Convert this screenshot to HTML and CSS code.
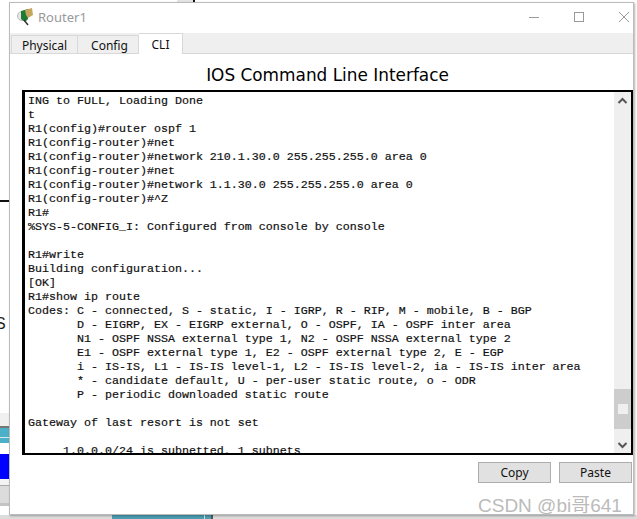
FILE: index.html
```html
<!DOCTYPE html>
<html lang="en">
<head>
<meta charset="utf-8">
<title>Router1</title>
<link rel="stylesheet" href="styles.css">
</head>
<body>
<div class="desk">
  <div class="bg-top"></div>
  <div class="bg-notch"></div>
  <div class="bg-line"></div>
  <div class="bg-s">S</div>
  <div class="bg-strip"></div>
  <div class="bg-bottom"><span class="bg-teal"></span><span class="bg-teal2"></span><span class="bg-dark"></span></div>
  <div class="window">
    <header class="titlebar">
      <svg class="app-icon" width="20" height="20" viewBox="0 0 20 20">
        <circle cx="6" cy="9" r="4.500" fill="#e6e6e6" stroke="#bcbcbc"/>
        <path d="M5 4l7-2 0 10-3 3-4-3z" fill="#1f7a35"/>
        <path d="M9 3l7-2 1 7-5 3-2-3z" fill="#c8a55c"/>
        <path d="M8 13l4 5" stroke="#333" stroke-width="1.500" fill="none"/>
      </svg>
      <span class="title">Router1</span>
      <div class="controls">
        <svg width="12" height="12" viewBox="0 0 12 12"><path d="M1 6.500h10" stroke="#999" fill="none"/></svg>
        <svg width="12" height="12" viewBox="0 0 12 12"><rect x="1.500" y="1.500" width="9" height="9" stroke="#999" fill="none"/></svg>
        <svg width="12" height="12" viewBox="0 0 12 12"><path d="M1 1l10 10M11 1L1 11" stroke="#999" fill="none"/></svg>
      </div>
    </header>
    <nav class="tabs">
      <div class="tab phys">Physical</div>
      <div class="tab conf">Config</div>
      <div class="tab active">CLI</div>
    </nav>
    <main class="panel">
      <h1 class="heading">IOS Command Line Interface</h1>
      <div class="terminal">
        <pre class="console">ING to FULL, Loading Done
t
R1(config)#router ospf 1
R1(config-router)#net
R1(config-router)#network 210.1.30.0 255.255.255.0 area 0
R1(config-router)#net
R1(config-router)#network 1.1.30.0 255.255.255.0 area 0
R1(config-router)#^Z
R1#
%SYS-5-CONFIG_I: Configured from console by console

R1#write
Building configuration...
[OK]
R1#show ip route
Codes: C - connected, S - static, I - IGRP, R - RIP, M - mobile, B - BGP
       D - EIGRP, EX - EIGRP external, O - OSPF, IA - OSPF inter area
       N1 - OSPF NSSA external type 1, N2 - OSPF NSSA external type 2
       E1 - OSPF external type 1, E2 - OSPF external type 2, E - EGP
       i - IS-IS, L1 - IS-IS level-1, L2 - IS-IS level-2, ia - IS-IS inter area
       * - candidate default, U - per-user static route, o - ODR
       P - periodic downloaded static route

Gateway of last resort is not set

     1.0.0.0/24 is subnetted, 1 subnets</pre>
        <div class="scrollbar">
          <svg class="arrow" width="15" height="17" viewBox="0 0 15 17"><path d="M3.500 11l4-4 4 4" stroke="#555" stroke-width="2" fill="none"/></svg>
          <div class="track"></div>
          <div class="thumb"><span class="grip"></span></div>
          <svg class="arrow" width="15" height="17" viewBox="0 0 15 17"><path d="M3.500 7l4 4 4-4" stroke="#555" stroke-width="2" fill="none"/></svg>
        </div>
      </div>
      <div class="actions">
        <button class="btn">Copy</button>
        <button class="btn">Paste</button>
      </div>
    </main>
  </div>
  <div class="watermark">CSDN @bi哥641</div>
</div>
</body>
</html>
```
FILE: styles.css
```css
* { box-sizing: border-box; }
html, body { margin: 0; height: 100%; background: #fff; overflow: hidden; }
.desk { position: relative; width: 637px; height: 519px; background: #fff; overflow: hidden; }
.bg-top { position: absolute; left: 177px; top: 0; width: 16px; height: 2px; background: #e4e4e4; }
.bg-notch { position: absolute; left: 193px; top: 0; width: 2px; height: 3px; background: #111; }
.bg-line { position: absolute; left: 0; top: 200px; width: 9px; height: 2px; background: #111; }
.bg-s { position: absolute; left: -5px; top: 315px; font: 16px "Liberation Sans", sans-serif; color: #222; }
.bg-strip { position: absolute; left: 0; top: 413px; width: 9px; height: 93px; background: linear-gradient(#f0f0f0 0 13px, #777 13px 15px, #4bb0c8 15px 24px, #d8e8ec 24px 25px, #4bb0c8 25px 30px, #fff 30px 41px, #0000ff 41px 66px, #f4f4f4 66px 72px, #aaa 72px 73px, #dcdcdc 73px 90px, #c4c4c4 90px 93px); }
.bg-bottom { position: absolute; left: 0; top: 515px; width: 637px; height: 4px; background: #dcdcdc; display: flex; padding-left: 112px; }
.bg-teal { width: 92px; background: #4a9fb3; }
.bg-teal2 { width: 6px; margin-left: 1px; background: #4a9fb3; }
.bg-dark { width: 2px; background: #555; }
.window { position: absolute; left: 9px; top: 2px; width: 625px; height: 513px; background: #fff; border: 1px solid #bbb; box-shadow: 1px 1px 2px rgba(0,0,0,.3); display: flex; flex-direction: column; }
.titlebar { height: 30px; flex: none; display: flex; align-items: center; padding: 0 0 2px 6px; }
.app-icon { margin-right: 2px; }
.title { font: 13px "Noto Sans", sans-serif; color: #999; }
.controls { margin-left: auto; display: flex; gap: 33px; padding-right: 3px; }
.tabs { height: 21px; flex: none; display: flex; align-items: flex-end; background: #efefef; border-bottom: 1px solid #d8d8d8; padding-left: 1px; }
.tab { height: 18px; padding-top: 1px; text-align: center; font: 12px/18px "Noto Sans", sans-serif; color: #111; background: #efefef; border: 1px solid #d8d8d8; border-bottom: 0; }
.phys { width: 67px; }
.conf { width: 61px; border-left: 0; padding-left: 3px; }
.tab.active { width: 44px; height: 21px; margin-bottom: -1px; background: #fff; padding-top: 0; line-height: 21px; border-left: 0; }
.panel { flex: 1; display: flex; flex-direction: column; padding: 0 0 0 12px; }
.heading { margin: 11px 0 5px; height: 20px; font: 400 16.900px/20px "DejaVu Sans", sans-serif; color: #000; text-align: center; }
.terminal { height: 365px; width: 611px; border: 2px solid #000; border-left-width: 3px; display: flex; overflow: hidden; }
.console { flex: 1; margin: 0; padding: 2px 0 0 3px; font: 11.670px/14px "Liberation Mono", monospace; color: #111; overflow: hidden; -webkit-text-stroke: .2px #111; }
.scrollbar { width: 17px; flex: none; background: #efefef; display: flex; flex-direction: column; }
.arrow { display: block; flex: none; margin: 0 1px; }
.track { flex: 1; }
.thumb { height: 40px; flex: none; margin-bottom: 7px; background: #cdcdcd; display: flex; align-items: center; justify-content: center; }
.grip { width: 10px; height: 10px; background: #efefef; display: block; }
.actions { display: flex; justify-content: flex-end; gap: 8px; margin-top: 7px; padding-right: 1px; }
.btn { width: 73px; height: 21px; background: #e1e1e1; border: 1px solid #adadad; font: 12px "Noto Sans", sans-serif; color: #111; padding: 0; }
.watermark { position: absolute; left: 478px; top: 490px; font: 19px "Liberation Sans", "Noto Sans CJK SC", sans-serif; color: #bbb; white-space: nowrap; }
```
